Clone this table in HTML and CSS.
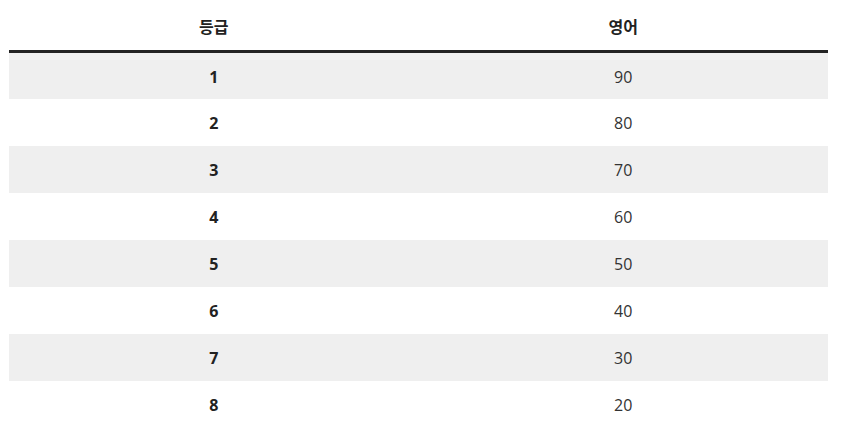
FILE: index.html
```html
<!DOCTYPE html>
<html lang="ko">
<head>
<meta charset="utf-8">
<link rel="stylesheet" href="styles.css">
</head>
<body>
<table class="grade-table">
  <thead>
    <tr><th>등급</th><th>영어</th></tr>
  </thead>
  <tbody>
    <tr><th>1</th><td>90</td></tr>
    <tr><th>2</th><td>80</td></tr>
    <tr><th>3</th><td>70</td></tr>
    <tr><th>4</th><td>60</td></tr>
    <tr><th>5</th><td>50</td></tr>
    <tr><th>6</th><td>40</td></tr>
    <tr><th>7</th><td>30</td></tr>
    <tr><th>8</th><td>20</td></tr>
  </tbody>
</table>
</body>
</html>
```
FILE: styles.css
```css
html, body {
  margin: 0;
  padding: 0;
  background: #fff;
}
body {
  padding: 0 13px 0 9px;
  font-family: "Open Sans", "Noto Sans CJK KR", sans-serif;
  font-size: 16px;
  color: #333;
}
.grade-table {
  width: 819px;
  border-collapse: collapse;
  table-layout: fixed;
}
.grade-table th,
.grade-table td {
  text-align: center;
  padding: 2px 0 0;
  vertical-align: middle;
}
.grade-table thead th {
  height: 48px;
  font-weight: 700;
  color: #222;
  border-bottom: 3px solid #222;
}
.grade-table tbody tr {
  height: 47px;
}
.grade-table tbody th {
  font-weight: 700;
  color: #222;
}
.grade-table tbody td {
  color: #333;
}
.grade-table tbody tr:nth-child(odd) {
  background: #efefef;
}
```
